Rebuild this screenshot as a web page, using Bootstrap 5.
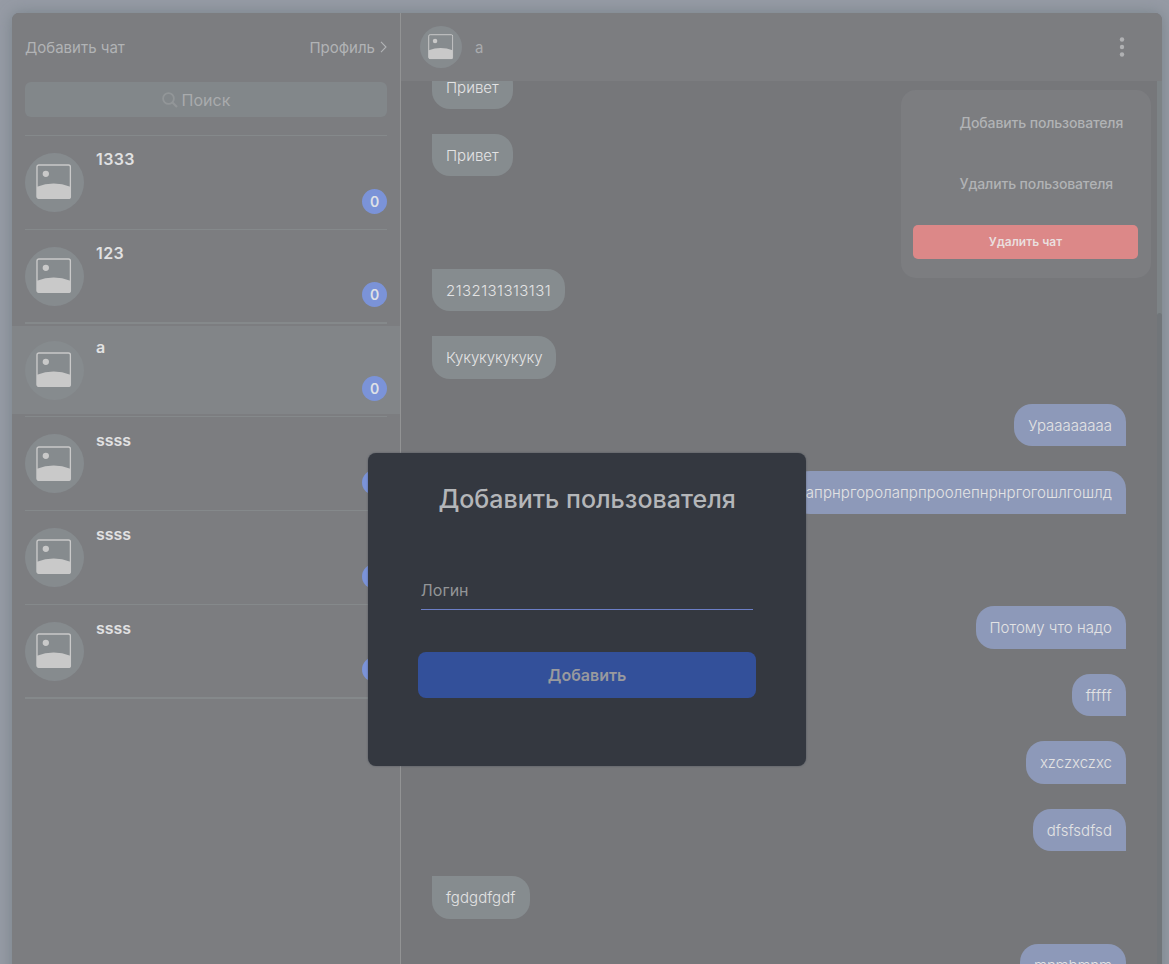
<!DOCTYPE html>
<html lang="ru">
<head>
<meta charset="utf-8">
<meta name="viewport" content="width=device-width, initial-scale=1">
<title>Чат</title>
<link href="https://cdn.jsdelivr.net/npm/bootstrap@5.3.0/dist/css/bootstrap.min.css" rel="stylesheet">
<style>
body{font-family:Inter,"Liberation Sans",sans-serif;background:#969ba5;height:964px;overflow:hidden}
.messenger{margin:13px 7px 0 12px;height:980px;border-radius:7px 7px 0 0;overflow:hidden;background:#76777a}
.shade{box-shadow:0 0 15px 0 rgba(90,105,110,.5)}
.sidebar{width:389px;background:#7c7d80;border-right:1px solid #929394}
.sidebar-top{height:69px;padding:2px 13px 0;font-size:15px;color:#b1b3b5}
.search{height:35px;margin:0 13px 18px;padding-right:20px;border-radius:6px;background:#82878a;color:#a9abad;font-size:16px}
.search svg{margin-right:4px}
.chats{margin-top:-.1px}
.chat-row{height:93.75px;padding:0 13px;position:relative}
.rule{height:1.25px;background:#85898b}
.avatar{width:59px;height:59px;background:#868b8e;border-radius:50%;flex:none}
.avatar svg{width:35.4px;height:35.4px;margin-top:-1px;margin-left:-1px}
.chat-body{padding-top:17px;height:92.5px}
.chat-name{font-size:16px;font-weight:600;line-height:20px;color:#e1e1e2;margin:-4px 0 0 12px}
.digits{letter-spacing:.4px}
.count{width:25px;height:25px;border-radius:50%;background:#7b93d8;color:#dfe1e6;font-size:14px;font-weight:600;margin-top:35.5px}
.chat-row.current .chat-body{background:#828588;margin:2px -13px 0;padding:15px 13px 0;height:88.5px}
.topbar{height:68px;background:#7c7d80;padding:0 37px 0 19px;color:#a9abae;font-size:15px}
.topbar .avatar{width:42px;height:42px;margin-right:13px}
.topbar .avatar svg{width:25.4px;height:25.4px;margin:0}
.feed{height:900px;overflow:hidden;position:relative;padding:0 36px 0 31px}
.thread{margin-top:-14.9px;gap:25px}
.bubble{height:42.5px;line-height:43px;padding:0 14px;font-size:15px;font-weight:300;color:#e3e3e4;white-space:nowrap}
.bubble.numeric{letter-spacing:.44px}
.bubble.snug{letter-spacing:-.15px}
.bubble.loose{letter-spacing:.06px}
.incoming{background:#868c8f;border-radius:0 18px 18px 18px;align-self:flex-start}
.outgoing{background:#8d99b9;border-radius:18px 18px 0 18px;align-self:flex-end}
.scroll-thumb{position:absolute;right:0;top:0;width:5px;height:100%;background:#7d8386}
.scroll-thumb i{display:block;margin-top:232px;height:700px;background:#717579;border-radius:3px 3px 0 0}
.chat-menu{position:absolute;left:901px;top:89.5px;width:250px;height:188px;border-radius:15px;background:#7c7d80;padding:0 13px 0 12px;color:#b1b3b5;font-size:14px;font-weight:500}
.chat-menu a{display:block;padding-left:46.5px;line-height:20px;color:inherit;text-decoration:none;white-space:nowrap;letter-spacing:-.14px}
.chat-menu .btn{height:34px;padding:0;border:0;border-radius:5px;background:#dc8888;color:#eadede;font-size:12px;font-weight:600}
.dialog-box{position:absolute;left:368px;top:453.4px;width:438.2px;height:313px;border-radius:8px;background:#343840;padding:29px 50px;box-shadow:0 0 2px rgba(45,55,65,.55)}
.dialog-box h1{font-size:25px;font-weight:500;line-height:34px;color:#b4b6b9;margin:0 0 56px}
.dialog-box input{width:332.5px;height:38px;margin:0 auto 42px;padding:0 0 2px;border:0;border-bottom:1px solid #6b7ec6;border-radius:0;background:transparent;font-size:16px;font-weight:400;color:#959799}
.dialog-box input::placeholder{color:#939597;opacity:1}
.dialog-box .btn{height:46px;border:0;border-radius:8px;background:#33509a;color:#999a9e;font-size:16px;font-weight:600}
</style>
</head>
<body>
<svg width="0" height="0" class="position-absolute">
  <symbol id="photo" viewBox="0 0 36 36"><rect x="1" y="1" width="34" height="34" rx="2" fill="none" stroke="#c9c9c9" stroke-width="1.4"/><circle cx="10" cy="10" r="3.2" fill="#c9c9c9"/><path d="M1 23.2Q18 16.5 35 23.2V33.5Q35 35.3 33 35.3H3Q1 35.3 1 33.5Z" fill="#c9c9c9"/></symbol>
</svg>
<div class="shade messenger d-flex">
  <aside class="sidebar flex-shrink-0">
    <div class="sidebar-top d-flex justify-content-between align-items-center"><span>Добавить чат</span><span class="d-flex align-items-center">Профиль<svg width="7" height="12" viewBox="0 0 7 12" style="margin:-3px 0 0 5px"><path d="M1 .8 6 6 1 11.2" fill="none" stroke="#b1b3b5" stroke-width="1.1"/></svg></span></div>
    <div class="search d-flex align-items-center justify-content-center"><svg width="16" height="16" viewBox="0 0 16 16" fill="none" stroke="#929698"><circle cx="6.5" cy="6.5" r="5.4" stroke-width="1.8"/><path d="m10.5 10.5 4.5 4.5" stroke-width="2.2"/></svg>Поиск</div>
    <div class="chats">
      <div class="chat-row"><div class="rule"></div><div class="chat-body d-flex"><div class="avatar d-flex align-items-center justify-content-center"><svg><use href="#photo"/></svg></div><div class="chat-name digits flex-grow-1">1333</div><span class="count d-flex align-items-center justify-content-center">0</span></div></div>
      <div class="chat-row"><div class="rule"></div><div class="chat-body d-flex"><div class="avatar d-flex align-items-center justify-content-center"><svg><use href="#photo"/></svg></div><div class="chat-name digits flex-grow-1">123</div><span class="count d-flex align-items-center justify-content-center">0</span></div></div>
      <div class="chat-row current"><div class="rule"></div><div class="chat-body d-flex"><div class="avatar d-flex align-items-center justify-content-center"><svg><use href="#photo"/></svg></div><div class="chat-name flex-grow-1">а</div><span class="count d-flex align-items-center justify-content-center">0</span></div></div>
      <div class="chat-row"><div class="rule"></div><div class="chat-body d-flex"><div class="avatar d-flex align-items-center justify-content-center"><svg><use href="#photo"/></svg></div><div class="chat-name flex-grow-1">ssss</div><span class="count"></span></div></div>
      <div class="chat-row"><div class="rule"></div><div class="chat-body d-flex"><div class="avatar d-flex align-items-center justify-content-center"><svg><use href="#photo"/></svg></div><div class="chat-name flex-grow-1">ssss</div><span class="count"></span></div></div>
      <div class="chat-row"><div class="rule"></div><div class="chat-body d-flex"><div class="avatar d-flex align-items-center justify-content-center"><svg><use href="#photo"/></svg></div><div class="chat-name flex-grow-1">ssss</div><span class="count"></span></div></div>
      <div class="chat-row"><div class="rule"></div></div>
    </div>
  </aside>
  <main class="flex-grow-1">
    <header class="topbar d-flex align-items-center"><div class="avatar d-flex align-items-center justify-content-center"><svg><use href="#photo"/></svg></div><span class="flex-grow-1" style="padding-top:2px">а</span><svg width="6" height="20" viewBox="0 0 6 20" fill="#b0b1b3"><circle cx="3" cy="2.5" r="2.2"/><circle cx="3" cy="10" r="2.2"/><circle cx="3" cy="17.5" r="2.2"/></svg></header>
    <section class="feed">
      <div class="thread d-flex flex-column">
        <div class="bubble incoming">Привет</div>
        <div class="bubble incoming">Привет</div>
        <div class="bubble"></div>
        <div class="bubble incoming numeric">2132131313131</div>
        <div class="bubble incoming snug">Кукукукукуку</div>
        <div class="bubble outgoing">Ураааааааа</div>
        <div class="bubble outgoing loose">апрнргоролапрпроолепнрнргогошлгошлд</div>
        <div class="bubble"></div>
        <div class="bubble outgoing">Потому что надо</div>
        <div class="bubble outgoing numeric">fffff</div>
        <div class="bubble outgoing">xzczxczxc</div>
        <div class="bubble outgoing loose">dfsfsdfsd</div>
        <div class="bubble incoming loose">fgdgdfgdf</div>
        <div class="bubble outgoing snug">mnmbmnm</div>
      </div>
      <div class="scroll-thumb"><i></i></div>
    </section>
  </main>
</div>
<div class="chat-menu">
  <a href="#" style="margin-top:23px">Добавить пользователя</a>
  <a href="#" style="margin:41px 0 31px">Удалить пользователя</a>
  <button class="btn w-100">Удалить чат</button>
</div>
<div class="dialog-box text-center">
  <h1>Добавить пользователя</h1>
  <input class="d-block" type="text" placeholder="Логин">
  <button class="btn w-100">Добавить</button>
</div>
<script src="https://cdn.jsdelivr.net/npm/bootstrap@5.3.0/dist/js/bootstrap.bundle.min.js"></script>
</body>
</html>
